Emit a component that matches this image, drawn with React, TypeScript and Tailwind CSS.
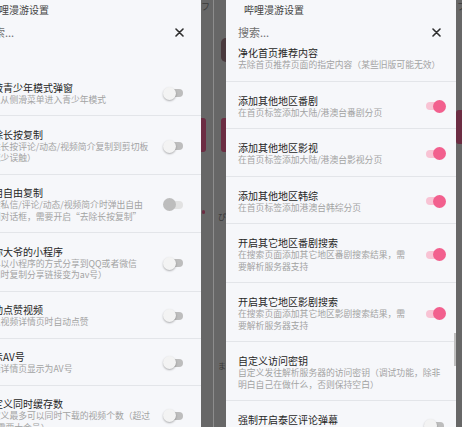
import React from "react";

type Sw = "on" | "off" | "dis" | "none";
type Item = { t: string; s: string[]; sw: Sw };

const rightItems: Item[] = [
  { t: "净化首页推荐内容", s: ["去除首页推荐页面的指定内容（某些旧版可能无效）"], sw: "none" },
  { t: "添加其他地区番剧", s: ["在首页标签添加大陆/港澳台番剧分页"], sw: "on" },
  { t: "添加其他地区影视", s: ["在首页标签添加大陆/港澳台影视分页"], sw: "on" },
  { t: "添加其他地区韩综", s: ["在首页标签添加港澳台韩综分页"], sw: "on" },
  { t: "开启其它地区番剧搜索", s: ["在搜索页面添加其它地区番剧搜索结果，需", "要解析服务器支持"], sw: "on" },
  { t: "开启其它地区影剧搜索", s: ["在搜索页面添加其它地区影剧搜索结果，需", "要解析服务器支持"], sw: "on" },
  { t: "自定义访问密钥", s: ["自定义发往解析服务器的访问密钥（调试功能，除非", "明白自己在做什么，否则保持空白）"], sw: "none" },
  { t: "强制开启泰区评论弹幕", s: ["强制开启泰区番剧的评论和弹幕（仅适用于"], sw: "off" },
];

const leftItems: Item[] = [
  { t: "屏蔽青少年模式弹窗", s: ["可以从侧滑菜单进入青少年模式"], sw: "off" },
  { t: "去除长按复制", s: ["去除长按评论/动态/视频简介复制到剪切板", "（减少误触）"], sw: "off" },
  { t: "启用自由复制", s: ["长按私信/评论/动态/视频简介时弹出自由", "复制对话框，需要开启“去除长按复制”"], sw: "dis" },
  { t: "去你大爷的小程序", s: ["不再以小程序的方式分享到QQ或者微信", "（同时复制分享链接变为av号）"], sw: "off" },
  { t: "自动点赞视频", s: ["进入视频详情页时自动点赞"], sw: "off" },
  { t: "显示AV号", s: ["视频详情页显示为AV号"], sw: "off" },
  { t: "自定义同时缓存数", s: ["自定义最多可以同时下载的视频个数（超过", "2个需要大会员）"], sw: "off" },
];

function Toggle({ sw }: { sw: Sw }) {
  if (sw === "none") return null;
  const track = sw === "on" ? "bg-[#f8c3d4]" : sw === "off" ? "bg-[#bdbdbd]" : "bg-[#e2e2e2]";
  const thumb =
    sw === "on"
      ? "right-0 bg-[#f2608e]"
      : sw === "off"
      ? "left-0 bg-[#f3f3f3] shadow-[0_1px_2px_rgba(0,0,0,0.3)]"
      : "left-0 bg-[#bdbdbd]";
  return (
    <div className="relative w-[22px] h-[13px] shrink-0">
      <div className={`absolute left-[2px] right-[2px] top-[2.5px] h-[8px] rounded-full ${track}`} />
      <div className={`absolute top-0 w-[13px] h-[13px] rounded-full ${thumb}`} />
    </div>
  );
}

function XIcon() {
  return (
    <svg width="9" height="9" viewBox="0 0 9 9" className="shrink-0">
      <path d="M1 1 L8 8 M8 1 L1 8" stroke="#2f2f2f" strokeWidth="1.6" strokeLinecap="round" />
    </svg>
  );
}

function Panel({ items, left }: { items: Item[]; left?: boolean }) {
  return (
    <div className={`relative w-[230px] shrink-0 bg-[#f6f7fa] flex flex-col ${left ? "ml-[-29px]" : ""}`}>
      <div className="shrink-0 h-[16px] pt-[4px] pl-[18px] text-[10px] leading-[12px] text-[#454545] whitespace-nowrap">
        哔哩漫游设置
      </div>
      <div className={`shrink-0 h-[20px] mt-[6px] flex items-center pl-[12px] ${left ? "pr-[17px]" : "pr-[15px]"}`}>
        <span className="flex-1 text-[11px] leading-[14px] text-[#707070]">搜索...</span>
        <XIcon />
      </div>
      {left && <div className="shrink-0 h-[27px]" />}
      {items.map((it, i) => (
        <div
          key={i}
          className={`shrink-0 flex items-center pl-[12px] border-b border-[#e3e5e9] ${left ? "pr-[16px]" : "pr-[10px]"} ${
            !left && i === 0 ? "pt-[5px] pb-[10px]" : left ? "pt-[12.5px] pb-[10px]" : "pt-[13px] pb-[10px]"
          }`}
        >
          <div className="flex-1 min-w-0 flex flex-col">
            <div className="text-[10px] leading-[12px] text-[#262626] whitespace-nowrap">{it.t}</div>
            {it.s.map((l, j) => (
              <div key={j} className="text-[8.8px] leading-[11.5px] text-[#a3a3a3] whitespace-nowrap">
                {l}
              </div>
            ))}
          </div>
          <Toggle sw={it.sw} />
        </div>
      ))}
      {!left && <div className="absolute right-0 top-[333px] w-[2px] h-[33px] bg-[#bfbfbf]" />}
    </div>
  );
}

export default function App() {
  return (
    <div
      className="w-[462px] h-[427px] overflow-hidden bg-[#676767] flex"
      style={{ fontFamily: "'Noto Sans CJK SC', 'Noto Sans', sans-serif" }}
    >
      <Panel items={leftItems} left />
      <div className="relative w-[12px] shrink-0 bg-[#676767]">
        <span className="absolute left-0 top-[2px] text-[9px] leading-[10px] text-[#3a3a3a]">フ</span>
        <div className="absolute left-0 top-[118px] w-[5px] h-[34px] rounded-r-[3px] bg-[#6c2d43]" />
        <div className="absolute left-[1px] top-[210px] w-[3px] h-[4px] rounded-full bg-[#6c2d43]" />
      </div>
      <div className="w-px shrink-0 bg-[#8d8d8d]" />
      <div className="relative w-[12px] shrink-0 bg-[#676767]">
        <div className="absolute right-0 top-[38px] w-[5px] h-[24px] rounded-l-full bg-[#4a3a3e]" />
        <div className="absolute right-0 top-[118px] w-[5px] h-[34px] rounded-l-[3px] bg-[#6c2d43]" />
        <span className="absolute right-0 top-[212px] text-[8px] leading-[10px] text-[#3a3a3a]">ぴ</span>
        <span className="absolute right-0 top-[361px] text-[8px] leading-[10px] text-[#3a3a3a]">ま</span>
      </div>
      <Panel items={rightItems} />
      <div className="relative w-[6px] shrink-0 bg-[#676767]">
        <span className="absolute left-[1px] top-[2px] text-[9px] leading-[10px] text-[#3a3a3a]">フ</span>
        <div className="absolute left-0 top-[110px] w-[6px] h-[34px] rounded-l-[3px] bg-[#6c2d43]" />
      </div>
    </div>
  );
}
